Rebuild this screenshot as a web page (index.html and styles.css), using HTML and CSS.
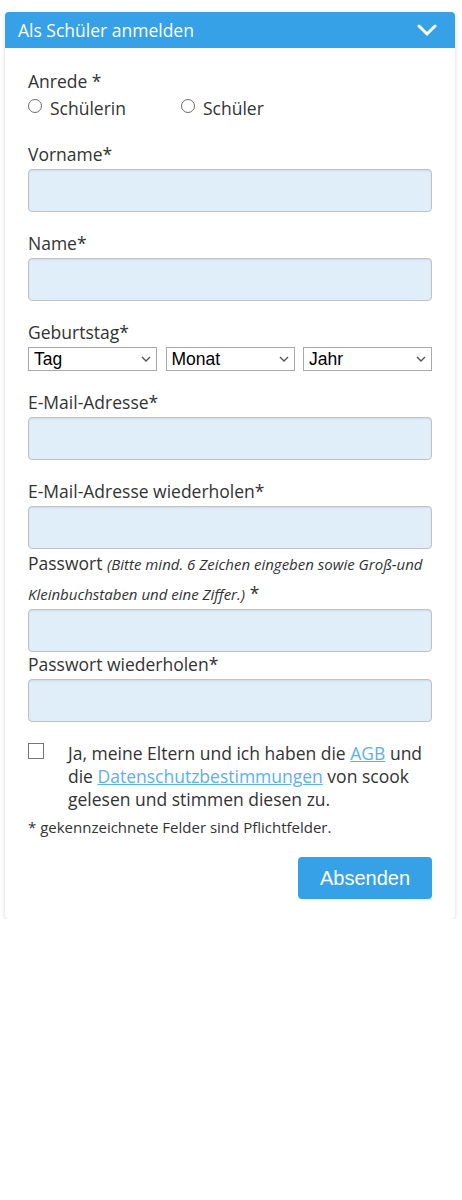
FILE: index.html
```html
<!DOCTYPE html>
<html lang="de">
<head>
<meta charset="utf-8">
<title>Als Schüler anmelden</title>
<link rel="stylesheet" href="styles.css">
</head>
<body>
<div class="card">
  <div class="card-head">
    <span class="card-title">Als Schüler anmelden</span>
    <svg class="chev" width="20" height="12" viewBox="0 0 20 12"><path d="M2 2 L10 10 L18 2" fill="none" stroke="#fff" stroke-width="3" stroke-linecap="round" stroke-linejoin="round"/></svg>
  </div>
  <form class="card-body">
    <div class="label">Anrede *</div>
    <div class="radios">
      <label class="radio r1"><input type="radio" name="anrede"><span>Schülerin</span></label>
      <label class="radio"><input type="radio" name="anrede"><span>Schüler</span></label>
    </div>

    <div class="field">
      <div class="label">Vorname*</div>
      <input class="text" type="text">
    </div>
    <div class="field">
      <div class="label">Name*</div>
      <input class="text" type="text">
    </div>
    <div class="field">
      <div class="label">Geburtstag*</div>
      <div class="selects">
        <div class="sel"><select><option>Tag</option></select><svg viewBox="0 0 10 6"><path d="M1 1 L5 5 L9 1" fill="none" stroke="#555" stroke-width="1.4"/></svg></div>
        <div class="sel"><select><option>Monat</option></select><svg viewBox="0 0 10 6"><path d="M1 1 L5 5 L9 1" fill="none" stroke="#555" stroke-width="1.4"/></svg></div>
        <div class="sel"><select><option>Jahr</option></select><svg viewBox="0 0 10 6"><path d="M1 1 L5 5 L9 1" fill="none" stroke="#555" stroke-width="1.4"/></svg></div>
      </div>
    </div>
    <div class="field">
      <div class="label">E-Mail-Adresse*</div>
      <input class="text" type="text">
    </div>
    <div class="field tight">
      <div class="label">E-Mail-Adresse wiederholen*</div>
      <input class="text" type="text">
    </div>
    <div class="field tight">
      <div class="label pw">Passwort <em>(Bitte mind. 6 Zeichen eingeben sowie Groß-und Kleinbuchstaben und eine Ziffer.)</em> *</div>
      <input class="text" type="password">
    </div>
    <div class="field">
      <div class="label">Passwort wiederholen*</div>
      <input class="text" type="password">
    </div>

    <label class="agree">
      <input type="checkbox">
      <span class="agree-text">Ja, meine Eltern und ich haben die <a href="#">AGB</a> und die <a href="#">Datenschutzbestimmungen</a> von scook gelesen und stimmen diesen zu.</span>
    </label>
    <p class="note">* gekennzeichnete Felder sind Pflichtfelder.</p>
    <div class="actions"><button type="button" class="btn">Absenden</button></div>
  </form>
</div>
</body>
</html>
```
FILE: styles.css
```css
html, body {
  margin: 0;
  padding: 0;
  background: #fff;
}
body {
  padding: 12px 7px 0 5px;
  font-family: "Open Sans", "Noto Sans", sans-serif;
  color: #333;
}
.card {
  border-radius: 4px;
  background: #fff;
  box-shadow: 0 1px 4px rgba(0,0,0,0.16);
  overflow: hidden;
}
.card-head {
  height: 36px;
  background: #36a1e6;
  display: flex;
  align-items: center;
  justify-content: space-between;
  padding: 0 18px 0 13px;
}
.card-title {
  color: #fff;
  font-size: 17.5px;
}
.chev {
  display: block;
  width: 20px;
  height: 12px;
}
.card-body {
  padding: 21px 23px 20px 23px;
  display: flex;
  flex-direction: column;
}
.label {
  font-size: 17.5px;
  line-height: 24px;
  margin-bottom: 3px;
}
.radios {
  display: flex;
  height: 24px;
  align-items: center;
  margin-bottom: 22px;
}
.radio {
  display: flex;
  align-items: center;
  font-size: 17.5px;
}
.r1 { width: 153px; }
.radio input {
  appearance: none;
  -webkit-appearance: none;
  width: 14px;
  height: 14px;
  border: 1px solid #6d6d6d;
  border-radius: 50%;
  margin: 0 8px 0 0;
  background: #fff;
  box-sizing: border-box;
  position: relative;
  top: -2px;
}
.field {
  margin-bottom: 19px;
}
.field.tight {
  margin-bottom: 0;
}
.text {
  display: block;
  box-sizing: border-box;
  width: 100%;
  height: 43px;
  margin: 0;
  background: #dfeef9;
  border: 1px solid #bfc3c6;
  border-radius: 4px;
  box-shadow: inset 0 1px 2px rgba(0,0,0,0.08);
  outline: none;
}
.label.pw {
  line-height: 29px;
  margin-bottom: 0;
}
.label.pw em {
  font-size: 15px;
}
.selects {
  display: flex;
  justify-content: space-between;
}
.sel {
  position: relative;
  width: 129px;
  height: 24px;
}
.sel select {
  appearance: none;
  -webkit-appearance: none;
  width: 100%;
  height: 24px;
  box-sizing: border-box;
  border: 1px solid #a9a9a9;
  border-radius: 0;
  background: #fff;
  font-family: "Liberation Sans", Arial, sans-serif;
  font-size: 17.5px;
  color: #000;
  padding: 0 0 0 5px;
  margin: 0;
}
.sel svg {
  position: absolute;
  right: 6px;
  top: 9px;
  width: 10px;
  height: 6px;
  pointer-events: none;
}
.agree {
  display: flex;
  align-items: flex-start;
  font-size: 17.5px;
  line-height: 23px;
}
.agree input {
  appearance: none;
  -webkit-appearance: none;
  flex: none;
  width: 16px;
  height: 16px;
  border: 1px solid #767676;
  background: #fff;
  box-sizing: border-box;
  margin: 2px 24px 0 0;
}
.agree-text {
  padding-top: 1px;
}
.agree a {
  color: #5cb0ee;
  text-decoration: underline;
}
.note {
  margin: 6px 0 0;
  font-size: 15px;
  line-height: 20px;
}
.actions {
  display: flex;
  justify-content: flex-end;
  margin-top: 20px;
}
.btn {
  width: 134px;
  height: 42px;
  border: 0;
  border-radius: 4px;
  background: #36a1e6;
  color: #fff;
  font-family: "Liberation Sans", Arial, sans-serif;
  font-size: 20px;
  padding: 0;
}
```
